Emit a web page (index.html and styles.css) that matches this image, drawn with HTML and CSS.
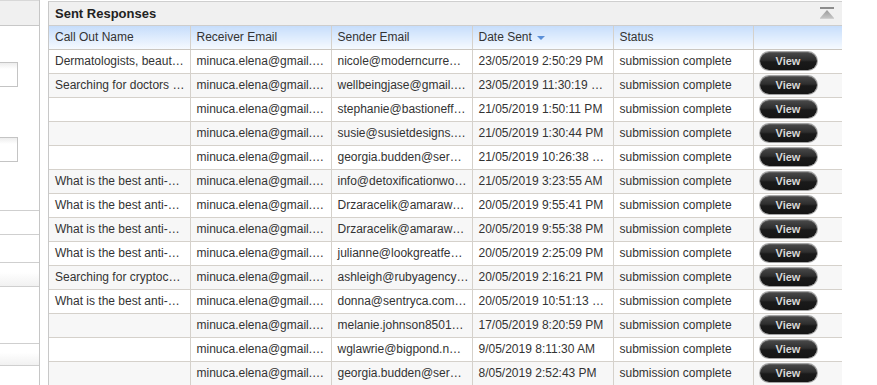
FILE: index.html
```html
<!DOCTYPE html>
<html>
<head>
<meta charset="utf-8">
<link rel="stylesheet" href="styles.css">
</head>
<body>
<div class="page">
  <aside class="side">
    <div class="side-head"></div>
    <div class="side-body">
      <div class="field f1"></div>
      <div class="field f2"></div>
      <ul class="side-list">
        <li class="item i1"></li>
        <li class="item i2"></li>
        <li class="item i3 shade"></li>
        <li class="item i4"></li>
        <li class="item i5 shade"></li>
        <li class="item i6"></li>
      </ul>
    </div>
  </aside>
  <section class="panel">
    <div class="panel-head">
      <span class="panel-title">Sent Responses</span>
      <span class="collapse"><svg width="14" height="13" viewBox="0 0 14 13"><defs><linearGradient id="g" x1="0" y1="0" x2="0" y2="1"><stop offset="0" stop-color="#9a9a9a"/><stop offset="1" stop-color="#c4c4c4"/></linearGradient></defs><rect x="0" y="0" width="14" height="2" fill="#8c8c8c"/><polygon points="7,3 14,11 0,11" fill="url(#g)"/><rect x="0" y="11" width="14" height="1" fill="#d0d0d0"/></svg></span>
    </div>
    <table class="grid">
      <colgroup>
        <col class="c1"><col class="c2"><col class="c3"><col class="c4"><col class="c5"><col class="c6">
      </colgroup>
      <thead>
        <tr>
          <th>Call Out Name</th>
          <th>Receiver Email</th>
          <th>Sender Email</th>
          <th>Date Sent <span class="sort"></span></th>
          <th>Status</th>
          <th></th>
        </tr>
      </thead>
      <tbody>
        <tr><td>Dermatologists, beaut…</td><td>minuca.elena@gmail.…</td><td>nicole@moderncurre…</td><td>23/05/2019 2:50:29 PM</td><td>submission complete</td><td><span class="btn">View</span></td></tr>
        <tr><td>Searching for doctors …</td><td>minuca.elena@gmail.…</td><td>wellbeingjase@gmail.…</td><td>23/05/2019 11:30:19 …</td><td>submission complete</td><td><span class="btn">View</span></td></tr>
        <tr><td></td><td>minuca.elena@gmail.…</td><td>stephanie@bastioneff…</td><td>21/05/2019 1:50:11 PM</td><td>submission complete</td><td><span class="btn">View</span></td></tr>
        <tr><td></td><td>minuca.elena@gmail.…</td><td>susie@susietdesigns.…</td><td>21/05/2019 1:30:44 PM</td><td>submission complete</td><td><span class="btn">View</span></td></tr>
        <tr><td></td><td>minuca.elena@gmail.…</td><td>georgia.budden@ser…</td><td>21/05/2019 10:26:38 …</td><td>submission complete</td><td><span class="btn">View</span></td></tr>
        <tr><td>What is the best anti-…</td><td>minuca.elena@gmail.…</td><td>info@detoxificationwo…</td><td>21/05/2019 3:23:55 AM</td><td>submission complete</td><td><span class="btn">View</span></td></tr>
        <tr><td>What is the best anti-…</td><td>minuca.elena@gmail.…</td><td>Drzaracelik@amaraw…</td><td>20/05/2019 9:55:41 PM</td><td>submission complete</td><td><span class="btn">View</span></td></tr>
        <tr><td>What is the best anti-…</td><td>minuca.elena@gmail.…</td><td>Drzaracelik@amaraw…</td><td>20/05/2019 9:55:38 PM</td><td>submission complete</td><td><span class="btn">View</span></td></tr>
        <tr><td>What is the best anti-…</td><td>minuca.elena@gmail.…</td><td>julianne@lookgreatfe…</td><td>20/05/2019 2:25:09 PM</td><td>submission complete</td><td><span class="btn">View</span></td></tr>
        <tr><td>Searching for cryptoc…</td><td>minuca.elena@gmail.…</td><td>ashleigh@rubyagency…</td><td>20/05/2019 2:16:21 PM</td><td>submission complete</td><td><span class="btn">View</span></td></tr>
        <tr><td>What is the best anti-…</td><td>minuca.elena@gmail.…</td><td>donna@sentryca.com…</td><td>20/05/2019 10:51:13 …</td><td>submission complete</td><td><span class="btn">View</span></td></tr>
        <tr><td></td><td>minuca.elena@gmail.…</td><td>melanie.johnson8501…</td><td>17/05/2019 8:20:59 PM</td><td>submission complete</td><td><span class="btn">View</span></td></tr>
        <tr><td></td><td>minuca.elena@gmail.…</td><td>wglawrie@bigpond.n…</td><td>9/05/2019 8:11:30 AM</td><td>submission complete</td><td><span class="btn">View</span></td></tr>
        <tr><td></td><td>minuca.elena@gmail.…</td><td>georgia.budden@ser…</td><td>8/05/2019 2:52:43 PM</td><td>submission complete</td><td><span class="btn">View</span></td></tr>
      </tbody>
    </table>
  </section>
</div>
</body>
</html>
```
FILE: styles.css
```css
html, body {
  margin: 0;
  padding: 0;
  background: #ffffff;
  overflow: hidden;
}
body {
  font-family: "Liberation Sans", Arial, sans-serif;
  font-size: 12px;
  color: #333333;
}
.page {
  display: flex;
  align-items: flex-start;
  gap: 8px;
  height: 385px;
}
.side {
  width: 39px;
  height: 385px;
  border-right: 1px solid #c6c6c6;
  flex: none;
  overflow: hidden;
}
.side-head {
  background: #f0f0f0;
  border-top: 1px solid #d8d8d8;
  border-bottom: 1px solid #c8c8c8;
  box-sizing: border-box;
  height: 26px;
}
.side-body {
  display: flex;
  flex-direction: column;
}
.field {
  width: 18px;
  height: 25px;
  box-sizing: border-box;
  border: 1px solid #c4c4c4;
  border-left: none;
  background: linear-gradient(#ededed, #ffffff 6px);
}
.f1 { margin-top: 36px; }
.f2 { margin-top: 50px; }
.side-list {
  list-style: none;
  margin: 48px 0 0 0;
  padding: 0;
  border-top: 1px solid #cfcfcf;
}
.item {
  border-bottom: 1px solid #cfcfcf;
  box-sizing: border-box;
}
.i1 { height: 24px; }
.i2 { height: 28px; }
.i3 { height: 24px; }
.i4 { height: 57px; }
.i5 { height: 22px; }
.i6 { height: 30px; }
.shade {
  background: linear-gradient(#ffffff, #ffffff 40%, #f1f1f1);
}
.panel {
  width: 793px;
  flex: none;
  border-left: 1px solid #c8c8c8;
  border-top: 1px solid #cfcfcf;
  margin-top: 1px;
}
.panel-head {
  height: 23px;
  background: #f0f0f0;
  display: flex;
  align-items: center;
  justify-content: space-between;
  padding: 0 8px 0 6px;
  border-bottom: 1px solid #cdcdcd;
}
.panel-title {
  font-weight: bold;
  font-size: 13px;
  color: #222222;
}
.collapse {
  display: flex;
  margin-top: -1px;
}
.grid {
  width: 793px;
  border-collapse: collapse;
  table-layout: fixed;
}
.c1 { width: 141px; }
.c2 { width: 141px; }
.c3 { width: 141px; }
.c4 { width: 141px; }
.c5 { width: 140px; }
.c6 { width: 89px; }
th, td {
  padding: 0 0 0 6px;
  border: 1px solid #d5d1cb;
  border-top: none;
  white-space: nowrap;
  overflow: hidden;
  text-overflow: ellipsis;
  text-align: left;
  font-weight: normal;
  color: #333333;
  box-sizing: border-box;
}
th:first-child, td:first-child { border-left: none; }
th:last-child, td:last-child { border-right: none; }
thead th {
  height: 23px;
  background: linear-gradient(#c6ddfb, #f6faff);
  border-bottom: 1px solid #cbc7c1;
  color: #333333;
}
tbody td { height: 24px; }
tbody tr:nth-child(even) td { background: #f7f7f7; }
.sort {
  display: inline-block;
  width: 0;
  height: 0;
  border-left: 4px solid transparent;
  border-right: 4px solid transparent;
  border-top: 4px solid #5a8fd8;
  vertical-align: middle;
  margin-left: 2px;
}
.btn {
  display: inline-flex;
  align-items: center;
  justify-content: center;
  width: 57px;
  height: 18px;
  border-radius: 9px;
  background: linear-gradient(#4a4a4a, #2e2e2e 45%, #1a1a1a 55%, #151515);
  box-shadow: inset 0 1px 0 rgba(255,255,255,0.12), 0 0 0 1px rgba(0,0,0,0.35);
  color: #d8d8d8;
  font-size: 11px;
  font-weight: bold;
  vertical-align: middle;
}
```
